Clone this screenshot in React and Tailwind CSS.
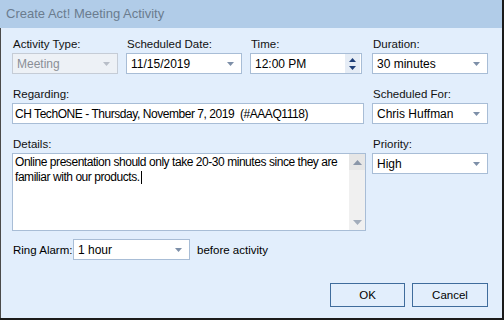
import React from 'react'

function Arrow({ color = '#7d8fa8' }) {
  return (
    <svg width="7" height="4" viewBox="0 0 7 4" className="shrink-0">
      <path d="M0 0h7L3.5 4z" fill={color} />
    </svg>
  )
}

function Combo({ value, width, disabled }) {
  return (
    <div
      className={`flex items-center h-[21px] border pl-[4px] pr-[7px] text-[12px] ${
        disabled ? 'border-[#c5ccd6] bg-[#edf1f6] text-[#8a8f96]' : 'border-[#a8bdd6] bg-white text-black'
      } ${width}`}
    >
      <span className="flex-1 truncate">{value}</span>
      <Arrow color={disabled ? '#b8bec8' : '#7d8fa8'} />
    </div>
  )
}

function Label({ children }) {
  return <div className="h-[16px] leading-[16px] mb-[1px] pl-[1px] text-[#111] whitespace-nowrap">{children}</div>
}

export default function App() {
  return (
    <div
      className="w-[504px] h-[320px] flex flex-col border-r-2 border-b-2 border-[#1a1a1a] text-[11.5px] leading-[16px] overflow-hidden"
      style={{ fontFamily: '"Liberation Sans", Arial, sans-serif' }}
    >
      <div className="h-[28px] shrink-0 bg-[#b1cce8] pl-[6px] flex items-center text-[13px] text-[#6b7c8f]">
        Create Act! Meeting Activity
      </div>
      <div className="flex-1 bg-[#e2eefc] border-l border-[#4a4a4a] pl-[11px] pt-[8px] flex flex-col">
        {/* row 1 */}
        <div className="flex">
          <div className="w-[114px]">
            <Label>Activity Type:</Label>
            <Combo value="Meeting" width="w-[106px]" disabled />
          </div>
          <div className="w-[124px]">
            <Label>Scheduled Date:</Label>
            <Combo value="11/15/2019" width="w-[116px]" />
          </div>
          <div className="w-[122px]">
            <Label>Time:</Label>
            <div className="flex items-center h-[21px] w-[112px] border border-[#a8bdd6] bg-white pl-[4px] text-[12px]">
              <span className="flex-1">12:00 PM</span>
              <div className="w-[15px] h-full bg-[#e6edf6] flex flex-col items-center justify-center gap-[4px] mr-[1px]">
                <svg width="7" height="4" viewBox="0 0 7 4"><path d="M0 4h7L3.5 0z" fill="#1f3f78" /></svg>
                <svg width="7" height="4" viewBox="0 0 7 4"><path d="M0 0h7L3.5 4z" fill="#1f3f78" /></svg>
              </div>
            </div>
          </div>
          <div>
            <Label>Duration:</Label>
            <Combo value="30 minutes" width="w-[116px]" />
          </div>
        </div>

        {/* row 2 */}
        <div className="flex mt-[12px]">
          <div className="w-[360px]">
            <Label>Regarding:</Label>
            <div className="h-[21px] w-[352px] border border-[#a8bdd6] bg-white pl-[2px] flex items-center whitespace-pre text-[12px] tracking-[-0.45px]">
              CH TechONE - Thursday, November 7, 2019  (#AAAQ1118)
            </div>
          </div>
          <div>
            <Label>Scheduled For:</Label>
            <Combo value="Chris Huffman" width="w-[116px]" />
          </div>
        </div>

        {/* row 3 */}
        <div className="flex mt-[12px]">
          <div className="w-[360px]">
            <Label>Details:</Label>
            <div className="h-[78px] w-[354px] border border-[#a8bdd6] bg-white flex">
              <div className="flex-1 pl-[2px] pr-[2px] leading-[15px] pt-[1px] text-[12px] tracking-[-0.45px]">
                Online presentation should only take 20-30 minutes since they are familiar with our products.
                <span className="inline-block w-[1px] h-[13px] bg-black align-middle ml-[1px]" />
              </div>
              <div className="w-[16px] bg-[#f0f0f0] flex flex-col items-center justify-between">
                <div className="w-[16px] h-[16px] bg-[#e6e6e6] flex items-center justify-center">
                  <svg width="9" height="5" viewBox="0 0 9 5"><path d="M0 5h9L4.5 0z" fill="#8a96a8" /></svg>
                </div>
                <div className="w-[16px] h-[16px] flex items-center justify-center">
                  <svg width="9" height="5" viewBox="0 0 9 5"><path d="M0 0h9L4.5 5z" fill="#a3adbb" /></svg>
                </div>
              </div>
            </div>
          </div>
          <div>
            <Label>Priority:</Label>
            <Combo value="High" width="w-[116px]" />
          </div>
        </div>

        {/* ring alarm */}
        <div className="flex items-center mt-[8px] whitespace-nowrap">
          <span className="w-[61px] pl-[1px]">Ring Alarm:</span>
          <Combo value="1 hour" width="w-[117px]" />
          <span className="ml-[7px]">before activity</span>
        </div>

        {/* buttons */}
        <div className="flex justify-end gap-[7px] mt-[23px] pr-[14px]">
          <button className="w-[75px] h-[24px] border border-[#3f6c9c] bg-[#e2eefc] text-black">OK</button>
          <button className="w-[76px] h-[24px] border border-[#3f6c9c] bg-[#e2eefc] text-black">Cancel</button>
        </div>
      </div>
    </div>
  )
}
